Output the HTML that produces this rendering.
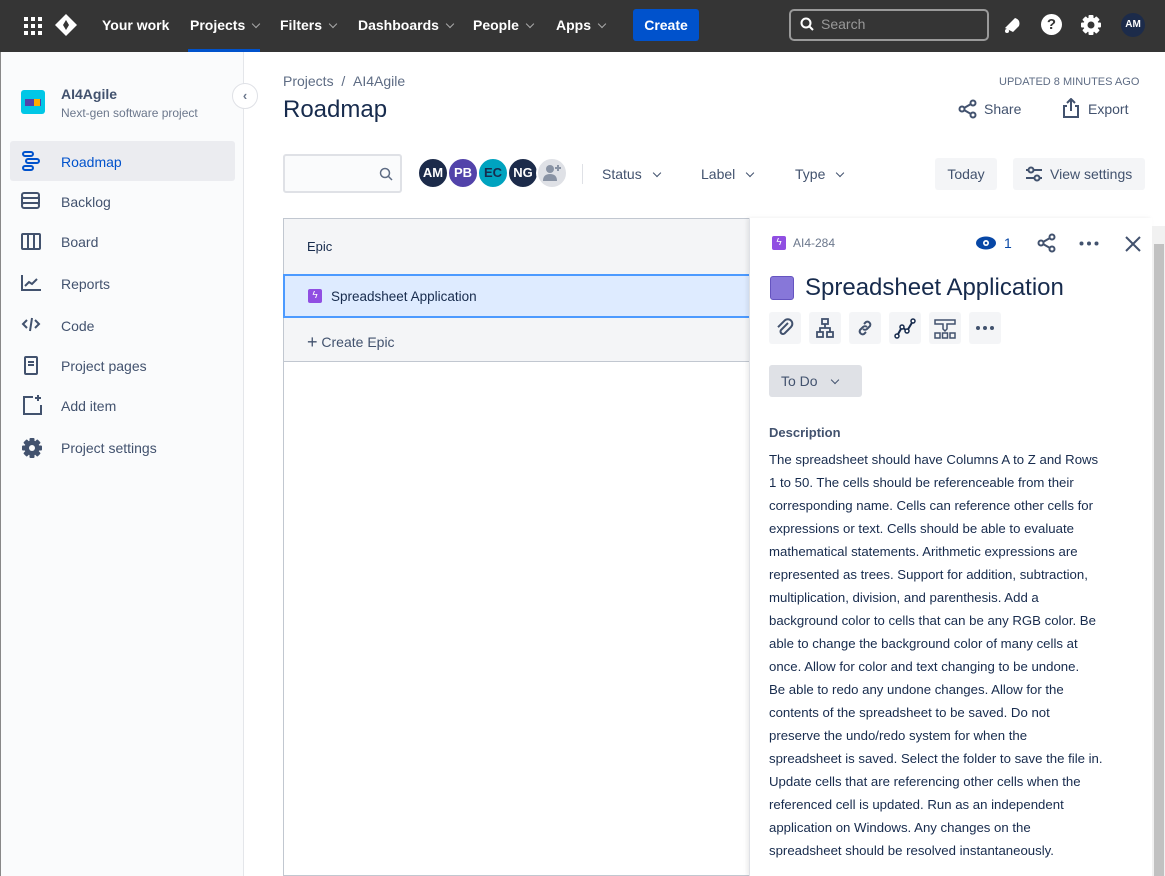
<!DOCTYPE html>
<html><head><meta charset="utf-8"><style>
*{box-sizing:border-box;margin:0;padding:0}
body{width:1165px;height:876px;overflow:hidden;font-family:"Liberation Sans",sans-serif;color:#172b4d;background:#fff;position:relative;font-size:14px}
.top{position:absolute;left:0;top:0;width:1165px;height:52px;background:#353535;color:#fff}
.top .n{position:absolute;top:17px;font-size:14px;font-weight:bold;color:#fff}
.chev{display:inline-block;width:6px;height:6px;border-right:1.5px solid #aaa;border-bottom:1.5px solid #aaa;transform:rotate(45deg);margin-left:8px;position:relative;top:-3px}
.side{position:absolute;left:0;top:52px;width:244px;height:824px;background:#fafbfc;border-right:1px solid #e4e6ea;border-left:1px solid #888}
.si{position:absolute;left:60px;font-size:14px;color:#42526e}
.ico{position:absolute;left:20px}
.dk{color:#42526e}
.abs{position:absolute}
.panel{position:absolute;left:749px;top:218px;width:403px;height:658px;background:#fff;border-left:1px solid #dfe1e6;box-shadow:-2px 0 4px rgba(0,0,0,.08)}
.desc{position:absolute;left:769px;top:448px;font-size:13.2px;line-height:23px;color:#172b4d;white-space:nowrap}
.tb{position:absolute;top:312px;width:32px;height:32px;background:#f4f5f7;border-radius:3px}
.av{position:absolute;top:157px;width:32px;height:32px;border-radius:50%;color:#fff;font-size:13px;font-weight:bold;text-align:center;line-height:28px;border:2px solid #fff}
</style></head><body>
<svg width="0" height="0" style="position:absolute"><defs>
<g id="gear"><g transform="translate(11 11)"><rect x="-2.5" y="-10" width="5" height="20" rx="1"/><rect x="-2.5" y="-10" width="5" height="20" rx="1" transform="rotate(45)"/><rect x="-2.5" y="-10" width="5" height="20" rx="1" transform="rotate(90)"/><rect x="-2.5" y="-10" width="5" height="20" rx="1" transform="rotate(135)"/><circle r="7.5"/></g></g>
</defs></svg>
<div class="top">
 <svg class="abs" style="left:24px;top:17px" width="18" height="18"><g fill="#fff"><rect x="0" y="0" width="4" height="4"/><rect x="7" y="0" width="4" height="4"/><rect x="14" y="0" width="4" height="4"/><rect x="0" y="7" width="4" height="4"/><rect x="7" y="7" width="4" height="4"/><rect x="14" y="7" width="4" height="4"/><rect x="0" y="14" width="4" height="4"/><rect x="7" y="14" width="4" height="4"/><rect x="14" y="14" width="4" height="4"/></g></svg>
 <svg class="abs" style="left:55px;top:14px" width="22" height="22"><path d="M11 0L22 11L11 22L0 11Z" fill="#fff"/><path d="M11 6L14 11L11 16L8 11Z" fill="#353535"/></svg>
 <span class="n" style="left:102px">Your work</span>
 <span class="n" style="left:190px">Projects<i class="chev"></i></span>
 <div class="abs" style="left:188px;top:49px;width:72px;height:3px;background:#0052cc"></div>
 <span class="n" style="left:280px">Filters<i class="chev"></i></span>
 <span class="n" style="left:358px">Dashboards<i class="chev"></i></span>
 <span class="n" style="left:473px">People<i class="chev"></i></span>
 <span class="n" style="left:556px">Apps<i class="chev"></i></span>
 <div class="abs" style="left:633px;top:9px;width:66px;height:32px;background:#0052cc;border-radius:3px;font-weight:bold;text-align:center;line-height:32px;font-size:14px">Create</div>
 <div class="abs" style="left:789px;top:9px;width:200px;height:32px;border:2px solid #9a9a9a;border-radius:5px;background:#353535"></div>
 <svg class="abs" style="left:800px;top:17px" width="14" height="14"><circle cx="6" cy="6" r="4.5" stroke="#fff" stroke-width="2" fill="none"/><path d="M9.5 9.5L13 13" stroke="#fff" stroke-width="2"/></svg>
 <span class="abs" style="left:821px;top:16px;color:#999;font-size:14px">Search</span>
 <svg class="abs" style="left:1002px;top:15px" width="20" height="20"><path d="M3 13L13 3Q19 5 17 11L11 17Z" fill="#fff"/><circle cx="5" cy="16" r="2" fill="#fff"/></svg>
 <div class="abs" style="left:1041px;top:14px;width:21px;height:21px;border-radius:50%;background:#fff;color:#353535;font-weight:bold;text-align:center;line-height:21px;font-size:15px">?</div>
 <svg class="abs" style="left:1080px;top:14px" width="22" height="22"><use href="#gear" fill="#fff"/><circle cx="11" cy="11" r="3.5" fill="#353535"/></svg>
 <div class="abs" style="left:1121px;top:13px;width:24px;height:24px;border-radius:50%;background:#1c2b4a;color:#fff;font-size:10px;font-weight:bold;text-align:center;line-height:24px">AM</div>
</div>

<div class="side">
 <div class="abs" style="left:20px;top:38px;width:24px;height:24px;background:#00c7e6;border-radius:3px"><div class="abs" style="left:4px;top:9px;width:16px;height:7px;background:#5243aa"></div><div class="abs" style="left:13px;top:9px;width:6px;height:7px;background:#ffab00"></div></div>
 <div class="abs" style="left:60px;top:34px;font-weight:bold;font-size:14px;color:#42526e">AI4Agile</div>
 <div class="abs" style="left:60px;top:54px;font-size:12px;color:#6b778c">Next-gen software project</div>
 <div class="abs" style="left:231px;top:31px;width:26px;height:26px;border-radius:50%;background:#fff;border:1px solid #dfe1e6;text-align:center;line-height:23px;color:#6b778c;font-size:13px;font-weight:bold">‹</div>
 <div class="abs" style="left:9px;top:89px;width:225px;height:40px;background:#ebecf0;border-radius:3px"></div>
 <svg class="ico" style="top:99px" width="20" height="20"><g fill="none" stroke="#0052cc" stroke-width="2"><rect x="2" y="1" width="10" height="4" rx="2"/><rect x="5" y="8" width="13" height="4" rx="2"/><rect x="2" y="15" width="10" height="4" rx="2"/></g></svg>
 <span class="si" style="top:102px;color:#0052cc">Roadmap</span>
 <svg class="ico" style="top:139px" width="20" height="20"><g fill="none" stroke="#42526e" stroke-width="2"><rect x="1" y="2" width="17" height="5" rx="2"/><rect x="1" y="7" width="17" height="5"/><rect x="1" y="12" width="17" height="5" rx="2"/></g></svg>
 <span class="si" style="top:142px">Backlog</span>
 <svg class="ico" style="top:180px" width="20" height="20"><g fill="none" stroke="#42526e" stroke-width="2"><rect x="1" y="2" width="18" height="15" rx="1"/><path d="M7 2V17M13 2V17"/></g></svg>
 <span class="si" style="top:182px">Board</span>
 <svg class="ico" style="top:221px" width="20" height="20"><g fill="none" stroke="#42526e" stroke-width="2"><path d="M1 2V17H20"/><path d="M4 13L8 9L11 11L16 6"/></g></svg>
 <span class="si" style="top:224px">Reports</span>
 <svg class="ico" style="top:263px" width="20" height="20"><g fill="none" stroke="#42526e" stroke-width="2"><path d="M6 5L2 9L6 13M14 5L18 9L14 13M11 3L9 16"/></g></svg>
 <span class="si" style="top:266px">Code</span>
 <svg class="ico" style="top:303px" width="20" height="22"><g fill="none" stroke="#42526e" stroke-width="2"><rect x="4" y="2" width="12" height="17" rx="1"/><path d="M7 7H13M7 10H13"/></g></svg>
 <span class="si" style="top:306px">Project pages</span>
 <svg class="ico" style="top:343px" width="22" height="22"><g fill="none" stroke="#42526e" stroke-width="2"><path d="M12 2H3V19H20V10"/><path d="M17 0V6M14 3H20"/></g></svg>
 <span class="si" style="top:346px">Add item</span>
 <svg class="ico" style="top:385px" width="22" height="22"><use href="#gear" fill="#42526e"/><circle cx="11" cy="11" r="3" fill="#fafbfc"/></svg>
 <span class="si" style="top:388px">Project settings</span>
</div>

<div class="abs dk" style="left:283px;top:73px;font-size:14px;color:#5e6c84">Projects&nbsp;&nbsp;/&nbsp;&nbsp;AI4Agile</div>
<div class="abs" style="left:283px;top:96px;font-size:24px;color:#172b4d">Roadmap</div>
<div class="abs" style="left:999px;top:76px;font-size:11px;color:#5e6c84">UPDATED 8 MINUTES AGO</div>
<svg class="abs" style="left:958px;top:99px" width="20" height="20"><g fill="none" stroke="#42526e" stroke-width="2"><circle cx="15" cy="4" r="2.5"/><circle cx="4" cy="10" r="2.5"/><circle cx="15" cy="16" r="2.5"/><path d="M6 9L13 5M6 11L13 15"/></g></svg>
<span class="abs" style="left:984px;top:101px;color:#42526e">Share</span>
<svg class="abs" style="left:1062px;top:98px" width="18" height="20"><g fill="none" stroke="#42526e" stroke-width="2"><path d="M5 8H2V19H16V8H13M9 13V1M5 5L9 1L13 5"/></g></svg>
<span class="abs" style="left:1088px;top:101px;color:#42526e">Export</span>

<div class="abs" style="left:283px;top:154px;width:119px;height:39px;border:2px solid #dfe1e6;border-radius:3px;background:#fafbfc"></div>
<svg class="abs" style="left:379px;top:167px" width="14" height="14"><circle cx="6" cy="6" r="4.5" stroke="#5e6c84" stroke-width="1.5" fill="none"/><path d="M9.5 9.5L13 13" stroke="#5e6c84" stroke-width="1.5"/></svg>
<div class="av" style="left:417px;background:#1c2b4a">AM</div>
<div class="av" style="left:447px;background:#5243aa">PB</div>
<div class="av" style="left:477px;background:#00a3bf;color:#172b4d">EC</div>
<div class="av" style="left:507px;background:#1c2b4a">NG</div>
<div class="av" style="left:536px;background:#dfe1e6"><svg width="28" height="28"><circle cx="12" cy="10" r="4" fill="#8993a4"/><path d="M5 22Q5 15 12 15Q19 15 19 22Z" fill="#8993a4"/><path d="M20 6V12M17 9H23" stroke="#8993a4" stroke-width="2"/></svg></div>
<div class="abs" style="left:582px;top:164px;width:1px;height:20px;background:#dfe1e6"></div>
<span class="abs" style="left:602px;top:166px;color:#42526e">Status<i class="chev" style="border-color:#42526e;margin-left:12px"></i></span>
<span class="abs" style="left:701px;top:166px;color:#42526e">Label<i class="chev" style="border-color:#42526e;margin-left:12px"></i></span>
<span class="abs" style="left:795px;top:166px;color:#42526e">Type<i class="chev" style="border-color:#42526e;margin-left:12px"></i></span>
<div class="abs" style="left:935px;top:158px;width:62px;height:32px;background:#f4f5f7;border-radius:3px;text-align:center;line-height:32px;color:#42526e">Today</div>
<div class="abs" style="left:1013px;top:158px;width:132px;height:32px;background:#f4f5f7;border-radius:3px;line-height:32px;color:#42526e;padding-left:37px">View settings</div>
<svg class="abs" style="left:1025px;top:166px" width="18" height="16"><g stroke="#42526e" stroke-width="2" fill="#f4f5f7"><path d="M1 4H17M1 12H17"/><circle cx="6" cy="4" r="2.5"/><circle cx="12" cy="12" r="2.5"/></g></svg>

<div class="abs" style="left:283px;top:218px;width:470px;height:658px;border:1px solid #c1c7d0;background:#fff"></div>
<div class="abs" style="left:284px;top:219px;width:466px;height:56px;background:#f4f5f7"></div>
<span class="abs" style="left:307px;top:239px;font-size:13px">Epic</span>
<div class="abs" style="left:283px;top:274px;width:470px;height:44px;background:#deebff;border:2px solid #4c9aff"></div>
<div class="abs" style="left:308px;top:289px;width:14px;height:14px;background:#904ee2;border-radius:2px;color:#fff;font-size:10px;text-align:center;line-height:14px">ϟ</div>
<span class="abs" style="left:331px;top:289px;font-size:13.5px">Spreadsheet Application</span>
<div class="abs" style="left:284px;top:318px;width:466px;height:44px;background:#f4f5f7;border-bottom:1px solid #c1c7d0"></div>
<span class="abs" style="left:307px;top:331px;font-size:14px;color:#42526e"><b style="font-weight:normal;font-size:18px;position:relative;top:1px">+</b> Create Epic</span>

<div class="panel"></div>
<div class="abs" style="left:1152px;top:226px;width:13px;height:650px;background:#f1f1f1"></div>
<div class="abs" style="left:1154px;top:244px;width:10px;height:632px;background:#c1c1c1"></div>
<div class="abs" style="left:772px;top:236px;width:14px;height:14px;background:#904ee2;border-radius:2px;color:#fff;font-size:10px;text-align:center;line-height:14px">ϟ</div>
<span class="abs" style="left:793px;top:236px;font-size:12px;color:#6b778c">AI4-284</span>
<svg class="abs" style="left:975px;top:236px" width="22" height="14"><ellipse cx="11" cy="7" rx="10" ry="6.5" fill="#0747a6"/><circle cx="11" cy="7" r="3" fill="#fff"/><circle cx="11" cy="7" r="1.3" fill="#0747a6"/></svg>
<span class="abs" style="left:1004px;top:235px;color:#0747a6">1</span>
<svg class="abs" style="left:1037px;top:233px" width="20" height="20"><g fill="none" stroke="#42526e" stroke-width="2"><circle cx="15" cy="4" r="2.5"/><circle cx="4" cy="10" r="2.5"/><circle cx="15" cy="16" r="2.5"/><path d="M6 9L13 5M6 11L13 15"/></g></svg>
<svg class="abs" style="left:1079px;top:241px" width="20" height="5"><g fill="#42526e"><circle cx="2.5" cy="2.5" r="2"/><circle cx="10" cy="2.5" r="2"/><circle cx="17.5" cy="2.5" r="2"/></g></svg>
<svg class="abs" style="left:1125px;top:236px" width="16" height="16"><path d="M1 1L15 15M15 1L1 15" stroke="#42526e" stroke-width="2"/></svg>
<div class="abs" style="left:770px;top:276px;width:24px;height:24px;background:#8777d9;border:1px solid #6554c0;border-radius:3px"></div>
<div class="abs" style="left:805px;top:274px;font-size:24px;color:#172b4d">Spreadsheet Application</div>
<div class="tb" style="left:769px"><svg width="32" height="32"><path d="M19 11L12 18a2.5 2.5 0 0 0 3.5 3.5L22 15a4.5 4.5 0 0 0-6.4-6.4L9 15.2" fill="none" stroke="#42526e" stroke-width="2"/></svg></div>
<div class="tb" style="left:809px"><svg width="32" height="32"><g fill="none" stroke="#42526e" stroke-width="1.8"><rect x="13" y="7" width="6" height="5"/><rect x="8" y="20" width="6" height="5"/><rect x="18" y="20" width="6" height="5"/><path d="M16 12V16H11V20M16 16H21V20"/></g></svg></div>
<div class="tb" style="left:849px"><svg width="32" height="32"><g fill="none" stroke="#42526e" stroke-width="2"><path d="M15 12L17 10a3 3 0 0 1 4 4l-3 3a3 3 0 0 1-4 0"/><path d="M17 20L15 22a3 3 0 0 1-4-4l3-3a3 3 0 0 1 4 0"/></g></svg></div>
<div class="tb" style="left:889px"><svg width="32" height="32"><g fill="none" stroke="#172b4d" stroke-width="2"><path d="M8 24L13 15L18 19L24 9"/></g><g fill="#fff" stroke="#172b4d" stroke-width="1.5"><circle cx="8" cy="24" r="2"/><circle cx="13" cy="15" r="2"/><circle cx="18" cy="19" r="2"/><circle cx="24" cy="9" r="2"/></g></svg></div>
<div class="tb" style="left:929px"><svg width="32" height="32"><g fill="none" stroke="#42526e" stroke-width="1.5"><path d="M6 8H26V12H18V17L16 19L14 17V12H6Z"/><rect x="6" y="21" width="5" height="5"/><rect x="13.5" y="21" width="5" height="5"/><rect x="21" y="21" width="5" height="5"/></g></svg></div>
<div class="tb" style="left:969px"><svg width="32" height="32"><g fill="#42526e"><circle cx="9" cy="16" r="2"/><circle cx="16" cy="16" r="2"/><circle cx="23" cy="16" r="2"/></g></svg></div>
<div class="abs" style="left:769px;top:365px;width:93px;height:32px;background:#dfe1e6;border-radius:3px;line-height:32px;padding-left:12px;color:#42526e">To Do<i class="chev" style="border-color:#42526e;margin-left:14px"></i></div>
<div class="abs" style="left:769px;top:425px;font-weight:bold;font-size:13px;color:#42526e">Description</div>
<div class="desc">The spreadsheet should have Columns A to Z and Rows<br>1 to 50. The cells should be referenceable from their<br>corresponding name. Cells can reference other cells for<br>expressions or text. Cells should be able to evaluate<br>mathematical statements. Arithmetic expressions are<br>represented as trees. Support for addition, subtraction,<br>multiplication, division, and parenthesis. Add a<br>background color to cells that can be any RGB color. Be<br>able to change the background color of many cells at<br>once. Allow for color and text changing to be undone.<br>Be able to redo any undone changes. Allow for the<br>contents of the spreadsheet to be saved. Do not<br>preserve the undo/redo system for when the<br>spreadsheet is saved. Select the folder to save the file in.<br>Update cells that are referencing other cells when the<br>referenced cell is updated. Run as an independent<br>application on Windows. Any changes on the<br>spreadsheet should be resolved instantaneously.</div>
</body></html>
